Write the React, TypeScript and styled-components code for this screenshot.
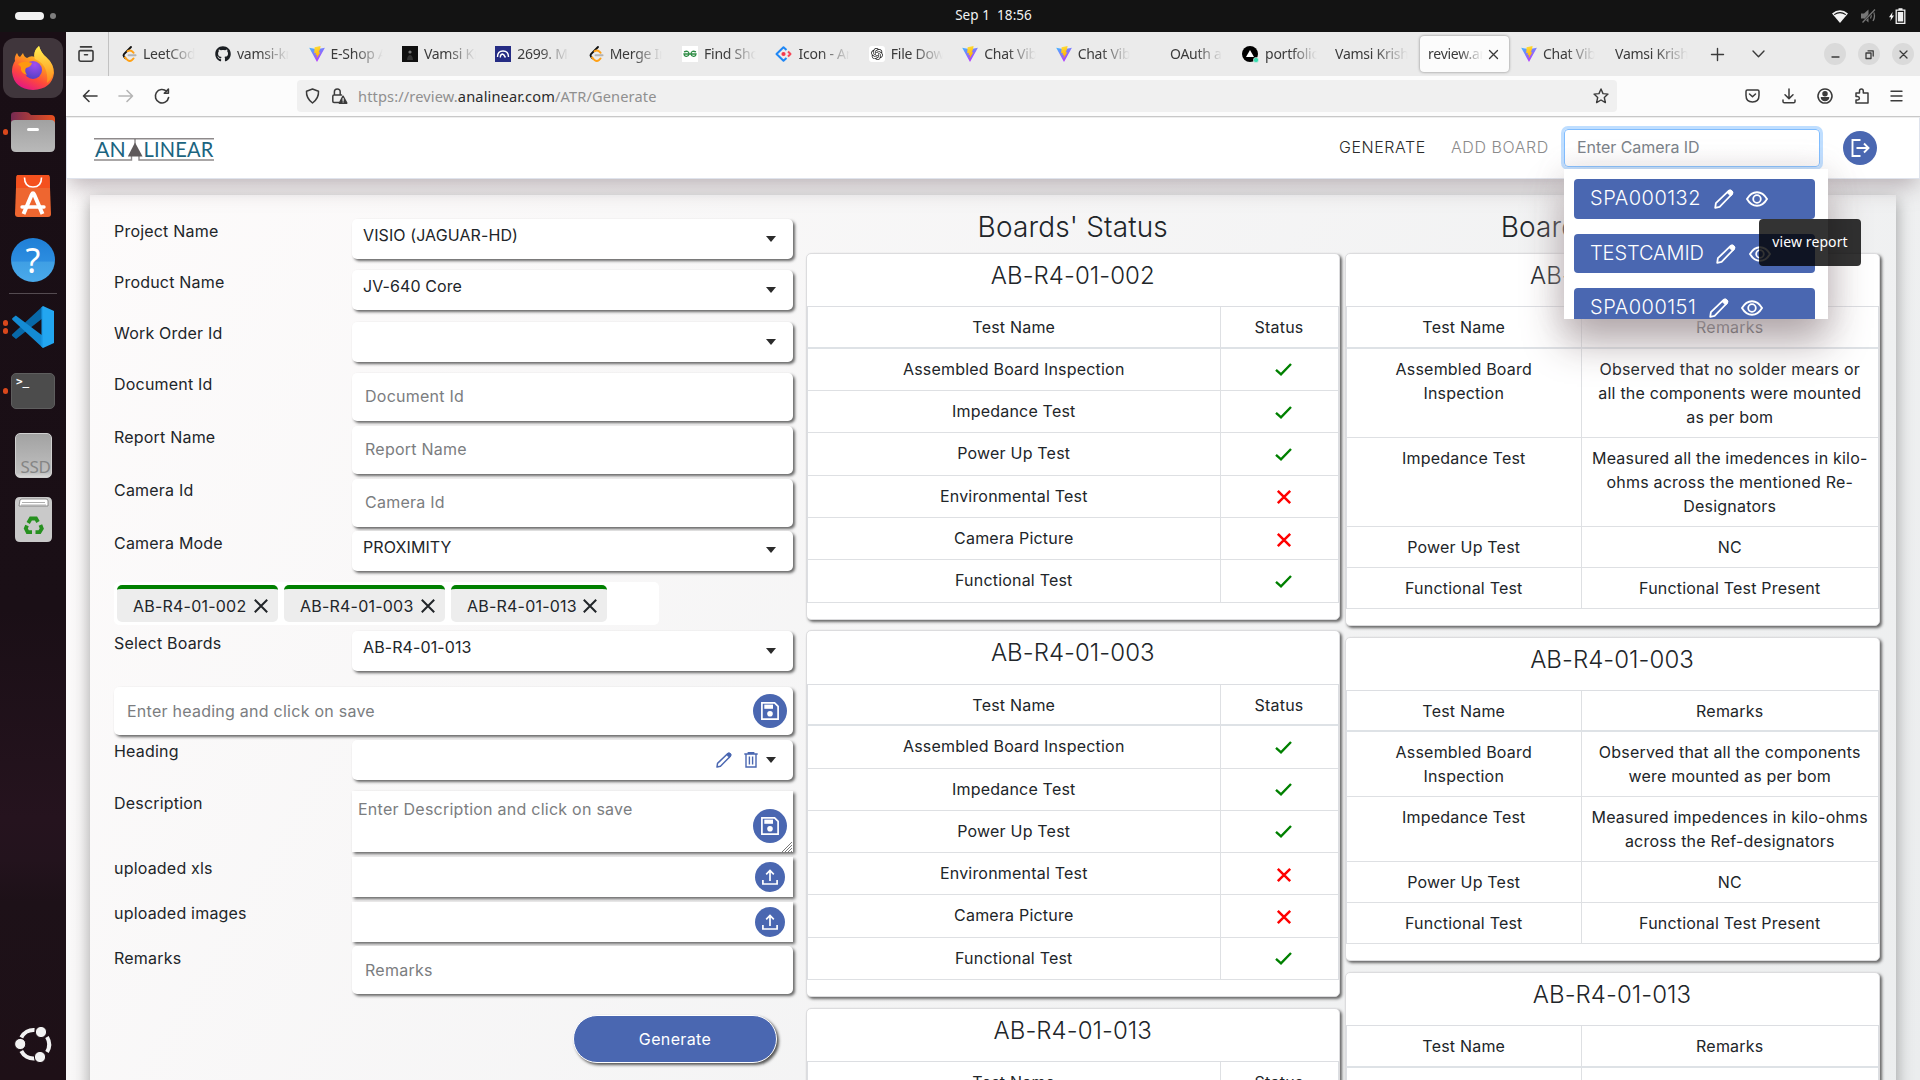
import React from "react";
import styled, { createGlobalStyle } from "styled-components";
import { FaGithub } from "react-icons/fa";
import { SiOpenai } from "react-icons/si";

const PAGE_FONT = 'Inter, "Liberation Sans", sans-serif';
const CHROME_FONT = '"Noto Sans", "Open Sans", sans-serif';
const BLUE = "#4a67b1";

const GlobalStyle = createGlobalStyle`
  * { box-sizing: border-box; }
  html, body { margin: 0; padding: 0; overflow: hidden; }
  body { background: #131313; }
  svg { display: block; flex: none; overflow: visible; }
`;

/* ---------- Desktop shell ---------- */
const Screen = styled.div`
  width: 1920px;
  height: 1080px;
  overflow: hidden;
  display: flex;
  flex-direction: column;
`;
const TopBar = styled.div`
  height: 32px;
  flex: none;
  background: #131313;
  display: grid;
  grid-template-columns: 1fr auto 1fr;
  align-items: center;
  color: #f2f2f2;
  padding: 0 14px 0 15px;
`;
const Workspaces = styled.div`
  display: flex;
  align-items: center;
  gap: 6px;
`;
const Pill = styled.span<{ $w: number; $h: number; $c: string }>`
  width: ${(p) => p.$w}px;
  height: ${(p) => p.$h}px;
  border-radius: 4px;
  background: ${(p) => p.$c};
`;
const Clock = styled.div`
  height: 32px;
  white-space: pre;
  font: 400 13.5px/30px ${CHROME_FONT};
  letter-spacing: 0.05px;
  padding-left: 66px;
`;
const Tray = styled.div`
  display: flex;
  justify-content: flex-end;
  align-items: center;
  gap: 13px;
`;
const Desktop = styled.div`
  flex: 1;
  display: flex;
  min-height: 0;
`;
const Dock = styled.div`
  width: 66px;
  flex: none;
  background: linear-gradient(180deg, #190e15 0%, #1a0f16 55%, #25131e 75%, #23131d 79%, #1d1118 83%, #1e1017 100%);
  display: flex;
  flex-direction: column;
  align-items: center;
  padding-top: 4px;
`;
const DockItem = styled.div<{ $h?: number }>`
  width: 66px;
  height: ${(p) => p.$h ?? 64}px;
  display: grid;
  grid-template-columns: 11px 44px 11px;
  align-items: center;
  justify-items: center;
`;
const RunDots = styled.div`
  display: flex;
  flex-direction: column;
  gap: 2.5px;
`;
const RunDot = styled.span`
  width: 5.5px;
  height: 5.5px;
  border-radius: 50%;
  background: #d9481c;
`;
const ActiveTile = styled.div`
  width: 60px;
  height: 60px;
  border-radius: 12px;
  background: #40363c;
  display: flex;
  align-items: center;
  justify-content: center;
`;
const DockRule = styled.div`
  width: 48px;
  height: 1px;
  background: #544b51;
  margin: 1px 0;
`;
const DockSpacer = styled.div`
  flex: 1;
`;

/* ---------- Browser ---------- */
const Browser = styled.div`
  flex: 1;
  min-width: 0;
  display: flex;
  flex-direction: column;
`;
const TabStrip = styled.div`
  height: 44px;
  flex: none;
  background: #ebebeb;
  display: flex;
  align-items: center;
  color: #3b3b3b;
`;
const ViewButton = styled.div`
  width: 43px;
  height: 44px;
  flex: none;
  display: flex;
  align-items: center;
  padding-left: 12px;
  border-right: 1px solid #c2c2c2;
`;
const Tab = styled.div<{ $w: number; $active?: boolean; $pad?: number }>`
  width: ${(p) => p.$w}px;
  height: 36px;
  flex: none;
  display: flex;
  align-items: center;
  gap: 6px;
  padding-left: ${(p) => p.$pad ?? 8}px;
  border-radius: 4px;
  font: 14px/36px ${CHROME_FONT};
  letter-spacing: -0.25px;
  ${(p) => p.$active && "background: #fcfcfc; box-shadow: 0 0 3px rgba(0,0,0,.45);"}
`;
const Tabs = styled.div`
  display: flex;
  align-items: center;
  width: 1602px;
  flex: none;
  padding-left: 5px;
`;
const TabText = styled.span<{ $w: number; $fade: number }>`
  width: ${(p) => p.$w}px;
  overflow: hidden;
  white-space: nowrap;
  mask-image: linear-gradient(90deg, #000 calc(100% - ${(p) => p.$fade}px), transparent);
`;
const WindowButtons = styled.div`
  display: flex;
  gap: 12px;
  margin-left: auto;
  padding-right: 6px;
`;
const RoundButton = styled.div`
  width: 22px;
  height: 22px;
  border-radius: 50%;
  background: #dadada;
  display: flex;
  align-items: center;
  justify-content: center;
`;
const StripActions = styled.div`
  display: flex;
  align-items: center;
  gap: 28px;
`;
const NavBar = styled.div`
  height: 41px;
  flex: none;
  background: #fcfcfc;
  border-bottom: 1px solid #c8c8c8;
  display: flex;
  align-items: center;
  padding: 0 17px 0 16px;
`;
const NavButtons = styled.div`
  display: flex;
  gap: 20px;
  width: 215px;
`;
const UrlBar = styled.div`
  width: 1320px;
  height: 32px;
  border-radius: 4px;
  background: #f0f0f0;
  display: flex;
  align-items: center;
  padding: 0 8px;
  gap: 10.5px;
  font: 14.6px/30px ${CHROME_FONT};
  letter-spacing: 0.13px;
  color: #8f8f8f;
`;
const Host = styled.span`
  color: #2b2b2b;
`;
const UrlText = styled.span`
  flex: 1;
`;
const NavTools = styled.div`
  margin-left: auto;
  display: flex;
  align-items: center;
  gap: 21.4px;
`;

/* ---------- Page ---------- */
const Page = styled.div`
  flex: 1;
  min-height: 0;
  overflow: hidden;
  background: linear-gradient(120deg, #fdfbfb 0%, #ebedee 100%);
  color: #212529;
  font: 380 16px/24px ${PAGE_FONT};
  letter-spacing: 0.2px;
`;
const Header = styled.header`
  height: 62px;
  background: #fff;
  border: 1px solid #dfe3ec;
  border-top-color: #eee;
  position: relative;
  z-index: 2;
  display: flex;
  align-items: center;
  padding: 0 42px 0 27px;
  box-shadow: 0 10px 22px -3px rgba(160, 148, 154, 0.7);
`;
const Menu = styled.nav`
  margin-left: auto;
  display: flex;
  align-items: center;
`;
const MenuLink = styled.span<{ $c: string; $mr: number; $w: number; $weight: number }>`
  width: ${(p) => p.$w}px;
  white-space: nowrap;
  color: ${(p) => p.$c};
  margin: 0 ${(p) => p.$mr}px 2px 0;
  font-weight: ${(p) => p.$weight};
  letter-spacing: 0.55px;
`;
const SearchBox = styled.div`
  position: relative;
  width: 256px;
  height: 38px;
  border: 1px solid #80bdff;
  border-radius: 4px;
  box-shadow: 0 0 0 3px #bfdeff;
  background: linear-gradient(180deg, #fff 50%, #fbfafb);
  padding: 0 12px;
  font-size: 16px;
  line-height: 35px;
  color: #7b8289;
  letter-spacing: -0.05px;
  margin-right: 23px;
`;
const Dropdown = styled.div`
  position: absolute;
  top: 39px;
  left: -1px;
  width: 264px;
  height: 150px;
  overflow: hidden;
  background: #fff;
  padding: 10px 13px 0 10px;
  display: flex;
  flex-direction: column;
  gap: 15px;
`;
const DropShadow = styled.div`
  position: absolute;
  top: 39px;
  left: -1px;
  width: 264px;
  height: 150px;
  box-shadow: 0 22px 38px rgba(172, 160, 163, 0.95), 0 0 30px rgba(172, 160, 163, 0.15);
`;
const CameraButton = styled.div<{ $ls: number }>`
  height: 39.5px;
  flex: none;
  border-radius: 4px;
  background: ${BLUE};
  color: #fff;
  display: flex;
  align-items: center;
  padding: 1px 0 0 16px;
  font-size: 20px;
  font-weight: 300;
  letter-spacing: ${(p) => p.$ls}px;
  gap: 12.5px;
`;
const CameraName = styled.span`
  padding-bottom: 1px;
`;
const Tooltip = styled.div`
  position: absolute;
  top: 89px;
  left: 194px;
  width: 102px;
  height: 47px;
  border-radius: 4px;
  background: rgba(0, 0, 0, 0.8);
  color: #fff;
  text-align: center;
  font: 14px/45px ${CHROME_FONT};
  letter-spacing: 0.1px;
`;
const Circle = styled.div<{ $d: number }>`
  width: ${(p) => p.$d}px;
  height: ${(p) => p.$d}px;
  flex: none;
  border-radius: 50%;
  background: ${BLUE};
  color: #fff;
  display: flex;
  align-items: center;
  justify-content: center;
`;

const Panel = styled.main`
  margin: 16px 24px 0;
  height: 1100px;
  background: linear-gradient(120deg, #fdfbfb 0%, #ebedee 100%);
  box-shadow: 0 5px 16px rgba(0, 0, 0, 0.36);
  display: flex;
  padding: 24px 16px 0 24px;
`;
const Form = styled.section`
  width: 679px;
  margin-right: 13px;
  flex: none;
`;
const FormRow = styled.div<{ $h: number }>`
  height: ${(p) => p.$h}px;
  display: flex;
  align-items: flex-start;
`;
const Label = styled.label`
  width: 238px;
  flex: none;
`;
const Field = styled.div<{ $h: number; $mt?: number; $square?: boolean; $kind?: "select" | "input" | "area" }>`
  flex: 1;
  height: ${(p) => p.$h}px;
  margin-top: ${(p) => p.$mt ?? 0}px;
  border-radius: ${(p) => (p.$square ? 0 : 5)}px;
  background: #fff;
  box-shadow: 2px 2px 3px #666;
  display: flex;
  align-items: ${(p) => (p.$kind === "area" ? "flex-start" : "center")};
  padding: ${(p) =>
    p.$kind === "input" ? "0 6px 1px 13px" : p.$kind === "area" ? "6px 6px 0 6px" : "0 17px 0 11px"};
  color: ${(p) => (p.$kind === "select" ? "#212529" : "#7b7d80")};
  letter-spacing: ${(p) => (p.$kind === "select" ? 0.1 : 0.25)}px;
`;
const FieldText = styled.span`
  flex: 1;
  height: 32px;
`;
const InputText = styled.span`
  flex: 1;
`;
const Caret = styled.span`
  border: 5.5px solid transparent;
  border-top: 6px solid #2b2b2b;
  border-bottom: 0;
  margin-bottom: 1px;
`;
const HeadingTools = styled.div`
  display: flex;
  align-items: center;
  gap: 12px;
  margin-right: 8.5px;
`;
const UploadSlot = styled.div`
  margin-left: auto;
  margin-right: -9px;
`;
const SaveSlot = styled.div`
  margin-top: 12px;
  display: flex;
  flex-direction: column;
  align-items: flex-end;
`;
const Grip = styled.div`
  height: 12px;
  margin: -2px -5px 0 0;
`;
const ChipBar = styled.div`
  width: 545px;
  height: 43px;
  border-radius: 5px;
  background: #fff;
  display: flex;
  gap: 6px;
  padding: 3px 3px 0;
`;
const Chip = styled.div<{ $w: number }>`
  width: ${(p) => p.$w}px;
  height: 37px;
  border-radius: 5px;
  border-top: 4px solid #008000;
  background: #ededed;
  display: flex;
  align-items: center;
  justify-content: space-between;
  padding: 0 10px 0 16px;
  letter-spacing: 0.22px;
  white-space: nowrap;
`;
const GenerateButton = styled.div`
  width: 204px;
  height: 48px;
  margin: 20px 0 0 459px;
  border-radius: 24px;
  border: 1px solid #fff;
  background: ${BLUE};
  box-shadow: 2px 2px 3px #555;
  color: #fff;
  text-align: center;
  line-height: 46px;
  letter-spacing: 0.35px;
`;

const BoardColumn = styled.section<{ $w: number; $mr: number }>`
  width: ${(p) => p.$w}px;
  margin-right: ${(p) => p.$mr}px;
  display: flex;
  flex-direction: column;
  gap: 10.7px;
  flex: none;
`;
const ColumnTitle = styled.h3`
  margin: -12px 0 0;
  height: 35.3px;
  line-height: 41px;
  text-align: center;
  font-size: 28px;
  font-weight: 300;
  letter-spacing: 0.15px;
  flex: none;
`;
const Card = styled.article`
  border: 1px solid #dcdcde;
  border-radius: 5px;
  background: #fff;
  box-shadow: 2px 2px 3px #666;
  padding-bottom: 16px;
  flex: none;
`;
const CardTitle = styled.h4`
  margin: 0;
  height: 52.2px;
  text-align: center;
  font-size: 24px;
  font-weight: 300;
  line-height: 44px;
  letter-spacing: 0.05px;
`;
const Table = styled.div<{ $cols: string }>`
  display: grid;
  grid-template-columns: ${(p) => p.$cols};
  border: 1px solid #dcdee2;
  border-bottom: 0;
  text-align: center;
`;
const Cell = styled.div<{ $h?: number; $head?: boolean; $side?: boolean }>`
  ${(p) => (p.$h ? `height: ${p.$h}px;` : "")}
  padding: 8px 6px 8px;
  white-space: nowrap;
  border-bottom: ${(p) => (p.$head ? "2px solid #dee2e6" : "1px solid #dee0e3")};
  border-left: ${(p) => (p.$side ? "1px solid #dee0e3" : "0")};
`;
const Mark = styled.div`
  display: flex;
  justify-content: center;
  padding: 6.5px 0 0 9px;
`;

/* ---------- Icons ---------- */
type P = { c?: string; s?: number };

const Pencil = ({ c = "#fff", s = 20 }: P) => (
  <svg width={s} height={s} viewBox="0 0 20 20" fill="none" stroke={c} strokeWidth="1.8" strokeLinejoin="round">
    <path d="M1.2 18.8L1.9 14.2L14.4 2.2Q16 .8 17.6 2.3T17.6 5.5L5.6 17.8Z" />
    <path d="M13 3.4L16.7 7L18.2 5.2Q19.4 3 17.8 1.8T14.9 1.6Z" fill={c} strokeWidth="1" />
  </svg>
);
const Eye = () => (
  <svg width="22" height="16" viewBox="0 0 22 16" fill="none" stroke="#fff" strokeWidth="1.9">
    <path d="M1 8Q5 1.2 11 1.2T21 8Q17 14.8 11 14.8T1 8Z" />
    <circle cx="11" cy="8" r="3.8" strokeWidth="1.8" />
  </svg>
);
const Trash = () => (
  <svg width="14" height="16" viewBox="0 0 14 16" fill="none" stroke={BLUE} strokeWidth="1.4">
    <path d="M.3 2H13.7M4.3 1.8V.7H9.7V1.8M2 2V15H12V2M5.4 4.5V12.5M8.6 4.5V12.5" />
  </svg>
);
const Save = () => (
  <svg width="18" height="18" viewBox="0 0 18 18" fill="none" stroke="#fff" strokeWidth="1.7">
    <path d="M.9 .9H13.6L17.1 4.4V17.1H.9Z" />
    <path d="M3.3 2.6H12V6.8H3.3Z" fill="#fff" stroke="none" />
    <circle cx="9" cy="11.7" r="2.8" fill="#fff" stroke="none" />
  </svg>
);
const Upload = () => (
  <svg width="16" height="16" viewBox="0 0 16 16" fill="none" stroke="#fff" strokeWidth="1.7">
    <path d="M8 12V1.5M4.2 5.3L8 1.5L11.8 5.3M.9 11V15H15.1V11" />
  </svg>
);
const Logout = () => (
  <svg width="19" height="18" viewBox="0 0 19 18" fill="none" stroke="#fff" strokeWidth="1.9">
    <path d="M9.5 1H1.5V17H9.5M5.5 9H17.5M13 4.5L17.5 9L13 13.5" />
  </svg>
);
const Check = () => (
  <svg width="17" height="13" viewBox="0 0 17 13" fill="none" stroke="#008000" strokeWidth="2.4">
    <path d="M1 6.8L6 11.3L16 1" />
  </svg>
);
const Cross = ({ c = "red", s = 14 }: P) => (
  <svg width={s} height={s} viewBox="0 0 14 14" fill="none" stroke={c} strokeWidth={c === "red" ? 2.5 : 2}>
    <path d="M.8 .8L13.2 13.2M13.2 .8L.8 13.2" />
  </svg>
);
type LineProps = { d: string; w?: number; h?: number; c?: string; sw?: number; children?: React.ReactNode };
const Line = ({ d, w = 16, h = 16, c = "#3b3b3b", sw = 1.4, children }: LineProps) => (
  <svg width={w} height={h} viewBox={`0 0 ${w} ${h}`} fill="none" stroke={c} strokeWidth={sw} strokeLinejoin="round" strokeLinecap="round">
    <path d={d} />
    {children}
  </svg>
);
const Vite = () => (
  <svg width="16" height="16" viewBox="0 0 16 16">
    <defs>
      <linearGradient id="va" x1="0" y1="0" x2=".6" y2="1"><stop offset="0" stopColor="#41b8ff" /><stop offset="1" stopColor="#bd34fe" /></linearGradient>
      <linearGradient id="vb" x1=".4" y1="0" x2=".6" y2="1"><stop offset="0" stopColor="#ffdd35" /><stop offset="1" stopColor="#ffa800" /></linearGradient>
    </defs>
    <path d="M.2 1.8L8 16L15.9 1.8L8 3.2Z" fill="url(#va)" />
    <path d="M11.6 0L5.6 1.2L5.2 7.2L7 6.9L6.5 9.2L8 8.9L7.6 12.6L11.4 6.2L9.7 6.4L11 3.2Z" fill="url(#vb)" />
  </svg>
);
const Leet = () => (
  <svg width="15" height="16" viewBox="0 0 15 16" fill="none" strokeLinecap="round" strokeWidth="1.9">
    <path d="M9 1L2 8.2Q1 9.4 2 10.6L3.5 12.3" stroke="#111" />
    <path d="M3 11.5L5.8 14.3Q8 15.8 10 14L11.6 12.4M5.5 5.3Q8 3.6 10 5.3L11.6 6.8" stroke="#ffa116" />
    <path d="M6.5 9.3H13.6" stroke="#b3b3b3" />
  </svg>
);
const DarkPhoto = () => (
  <svg width="16" height="16" viewBox="0 0 16 16"><path d="M0 0H16V16H0Z" fill="#101010" /><circle cx="8" cy="6" r="1.6" fill="#777" /><path d="M5 14Q5.5 9 8 9T11 14Z" fill="#333" /></svg>
);
const BlueSquare = () => (
  <svg width="16" height="16" viewBox="0 0 16 16" fill="none" stroke="#fff" strokeWidth="1.4"><path d="M0 0H16V16H0Z" fill="#252c84" stroke="none" /><path d="M2.5 11Q2.5 5 8 5T13.5 11M5.3 11.5Q5.3 8 8 8M8.2 8L10.5 11.5" /></svg>
);
const Geeks = () => (
  <svg width="16" height="16" viewBox="0 0 16 16" fill="none" stroke="#2f8d46" strokeWidth="1.3"><path d="M0 0H16V16H0Z" fill="#fff" stroke="none" /><path d="M2 5.8Q7 4 7 8.2Q6.5 10.8 4 10.4Q2 10 2 8H14Q14 10 12 10.4Q9.5 10.8 9 8.2Q9 4 14 5.8" /></svg>
);
const Ant = () => (
  <svg width="17" height="16" viewBox="0 0 17 16" fill="none" strokeWidth="2" strokeLinejoin="round"><path d="M11.5 4L8.5 1.2L1.5 8L8.5 14.8L11.5 12" stroke="#1f87f5" /><path d="M13 5.5L15.5 8L13 10.5" stroke="#f5495a" /><circle cx="8.5" cy="8" r="2.1" fill="#f5394c" /></svg>
);
const Portfolio = () => (
  <svg width="17" height="16" viewBox="0 0 17 16"><circle cx="8" cy="8" r="8" fill="#000" /><path d="M8 4L12 11H4Z" fill="#fff" /><circle cx="14" cy="14" r="2.6" fill="#38dcb0" stroke="#ebebeb" strokeWidth=".6" /></svg>
);
const GptTile = styled.span`
  width: 16px;
  height: 16px;
  background: #fff;
  border-radius: 3px;
  display: flex;
  align-items: center;
  justify-content: center;
  color: #222;
`;

const LogoBox = styled.div`
  padding-top: 3px;
`;
const LogoWord = styled.text`
  font: 400 22px Lato, sans-serif;
  fill: #1b6480;
`;
const Logo = () => (
  <svg width="120" height="24" viewBox="0 0 120 24">
    <path d="M0 .8H120M0 22H37.5V17.5M45 17.5V22H120" fill="none" stroke="#8e8a8b" strokeWidth="1.4" />
    <path d="M41 1V6" stroke="#5f5a5b" strokeWidth="1" />
    <path d="M41 4.5L48.6 18.5H33.8Z" fill="#5f5a5b" />
    <LogoWord x="1" y="18.7" textLength="31" lengthAdjust="spacingAndGlyphs">AN</LogoWord>
    <LogoWord x="49.5" y="18.7" textLength="70" lengthAdjust="spacingAndGlyphs">LINEAR</LogoWord>
  </svg>
);

/* Dock artwork */
const Firefox = () => (
  <svg width="44" height="46" viewBox="0 0 44 46">
    <defs>
      <linearGradient id="fa" x1=".8" y1="0" x2=".3" y2="1"><stop offset="0" stopColor="#fff44f" /><stop offset=".4" stopColor="#ff9a1f" /><stop offset=".7" stopColor="#ff4a3a" /><stop offset="1" stopColor="#e31587" /></linearGradient>
      <radialGradient id="fb" cx=".6" cy=".2" r=".9"><stop offset="0" stopColor="#a24df0" /><stop offset="1" stopColor="#4a3fc0" /></radialGradient>
      <linearGradient id="fc" x1="0" y1="0" x2="0" y2="1"><stop offset="0" stopColor="#fff050" /><stop offset="1" stopColor="#ff8a1c" /></linearGradient>
    </defs>
    <path d="M6 8Q7 11 9 12L12 8Q13 12 16 13Q20 10 24 12Q22 6 28 1Q30 8 35 12Q43 19 43 28Q41 44 22 45Q3 44 1 27Q1 20 4 16Q3 12 6 8Z" fill="url(#fa)" />
    <path d="M28 1Q30 8 35 12Q43 19 42 28Q41 34 36 38Q38 20 24 14Q21 7 28 1Z" fill="url(#fc)" />
    <circle cx="22" cy="25" r="9" fill="url(#fb)" />
    <path d="M7 19Q13 15 21 18Q20 22 15 23Q13 26 16 30Q9 28 10 22Z" fill="#ff980e" />
  </svg>
);
const Files = () => (
  <svg width="44" height="42" viewBox="0 0 44 42">
    <defs>
      <linearGradient id="ga" x1="0" y1="0" x2="1" y2="0"><stop offset="0" stopColor="#762a52" /><stop offset="1" stopColor="#e8501f" /></linearGradient>
      <linearGradient id="gb" x1="0" y1="0" x2="0" y2="1"><stop offset="0" stopColor="#a1a1a1" /><stop offset="1" stopColor="#b9b9b9" /></linearGradient>
    </defs>
    <path d="M0 14V4Q0 1 4 1H15Q18 1 20 4H40Q44 4 44 8V14Z" fill="url(#ga)" />
    <path d="M0 12Q0 9 4 9H40Q44 9 44 13V36Q44 41 39 41H5Q0 41 0 36Z" fill="url(#gb)" />
    <path d="M17.5 18.5H26.5" stroke="#fff" strokeWidth="3" strokeLinecap="round" />
  </svg>
);
const AppCenter = () => (
  <svg width="36" height="42" viewBox="0 0 36 42" fill="none" stroke="#fff">
    <path d="M3 0H33Q34.5 0 34.6 2L36 39Q36 42 33 42H3Q0 42 0 39L1.4 2Q1.5 0 3 0Z" fill="#ee6630" stroke="none" />
    <path d="M3 0H33Q34.5 0 34.6 2L35 13H1L1.4 2Q1.5 0 3 0Z" fill="#f4511e" stroke="none" />
    <path d="M9.5 2.5Q9.5 12 18 12T26.5 2.5" strokeWidth="1.6" />
    <path d="M8.5 39L16.8 19.5Q18 17 19.2 19.5L27.5 39" strokeWidth="4" />
    <path d="M7 32H29" strokeWidth="3.4" strokeLinecap="round" />
  </svg>
);
const HelpBall = styled.div`
  width: 44px;
  height: 44px;
  border-radius: 50%;
  background: linear-gradient(180deg, #1f7fd6 0%, #2c8de0 53%, #3f9fe4 54%, #4aa9ea 100%);
  color: #fff;
  text-align: center;
  font: 400 34px/44px "Noto Sans", sans-serif;
`;
const VsCode = () => (
  <svg width="42" height="42" viewBox="0 0 42 42">
    <path d="M0 28.5L31 0V12L4 33L.6 30.2Q-.6 29.4 0 28.5Z" fill="#0868a8" />
    <path d="M.6 12L3.8 9.4L31 30V42L.6 14Q-.6 13 .6 12Z" fill="#148bd4" />
    <path d="M31 0L42 5V37L31 42Z" fill="#23a6f0" />
    <path d="M31 0V42L29.5 40.5V1.5Z" fill="#1c9be8" />
  </svg>
);
const Terminal = styled.div`
  width: 44px;
  height: 36px;
  border-radius: 5px;
  background: #4c4c4c;
  border: 1px solid #5e5e5e;
  color: #fff;
  font: 700 11px/16px "DejaVu Sans Mono", monospace;
  padding-left: 4px;
`;
const Drive = styled.div`
  width: 37px;
  height: 45px;
  border-radius: 5px;
  border: 1px solid #d0d0d0;
  background: linear-gradient(180deg, #a2a2a2, #bfbfbf 90%, #dadada);
  color: #858585;
  font: 400 17px/66px "Noto Sans", sans-serif;
  letter-spacing: -0.4px;
  text-align: right;
`;
const Trashcan = () => (
  <svg width="37" height="45" viewBox="0 0 37 45">
    <path d="M5 0H32Q37 0 37 5V40Q37 45 32 45H5Q0 45 0 40V5Q0 0 5 0Z" fill="#c9c9c9" />
    <path d="M4 9L5 3Q6 2 7 2H31Q33 2 33 4V9Z" fill="#fff" stroke="#777" strokeWidth=".8" />
    <path d="M7 5.5H30M6 8H31" stroke="#999" strokeWidth=".8" />
    <g fill="none" stroke="#26901f" strokeWidth="3.8">
      <path d="M13.2 26L15.8 21.5H21L23 25" />
      <path d="M25.4 28L26.8 31.5L24.6 35.2H20.5" />
      <path d="M17 35.2H12.6L10.8 31.5L12 28.5" />
    </g>
  </svg>
);
const Ubuntu = () => (
  <svg width="36" height="36" viewBox="0 0 36 36" fill="none" stroke="#f2f2f2" strokeWidth="4">
    <path d="M6.3 11.5A13.8 13.8 0 0 1 19.5 4M32 11A14.5 14.5 0 0 1 32 26M19.5 32.5A13.8 13.8 0 0 1 6.3 25" />
    <g fill="#f2f2f2" stroke="#1e1017" strokeWidth="1">
      <circle cx="5.2" cy="18" r="5.6" /><circle cx="26" cy="6" r="5.6" /><circle cx="25" cy="31" r="5.6" />
    </g>
  </svg>
);

/* ---------- Data ---------- */
const leftTabs: { icon: React.ReactNode; t: string; w: number }[] = [
  { icon: <Leet />, t: "LeetCode", w: 93 },
  { icon: <FaGithub size={16} color="#1b1f23" />, t: "vamsi-kri", w: 93.5 },
  { icon: <Vite />, t: "E-Shop App", w: 93.4 },
  { icon: <DarkPhoto />, t: "Vamsi Kri", w: 93.4 },
  { icon: <BlueSquare />, t: "2699. Mod", w: 93.4 },
  { icon: <Leet />, t: "Merge In", w: 93.4 },
  { icon: <Geeks />, t: "Find Short", w: 93.4 },
  { icon: <Ant />, t: "Icon - Ant", w: 93.4 },
  { icon: <GptTile><SiOpenai size={12} /></GptTile>, t: "File Down", w: 93.4 },
  { icon: <Vite />, t: "Chat Vibe", w: 93.4 },
  { icon: <Vite />, t: "Chat Vibe", w: 93.4 },
];

const cameras = [
  { name: "SPA000132", ls: 0.5 },
  { name: "TESTCAMID", ls: -0.1 },
  { name: "SPA000151", ls: 0.5 },
];

const statusRows: [string, boolean][] = [
  ["Assembled Board Inspection", true],
  ["Impedance Test", true],
  ["Power Up Test", true],
  ["Environmental Test", false],
  ["Camera Picture", false],
  ["Functional Test", true],
];
const boards = ["AB-R4-01-002", "AB-R4-01-003", "AB-R4-01-013"];
const remarks: [string, React.ReactNode][][] = [
  [
    ["Assembled Board Inspection", <>Observed that no solder mears or<br />all the components were mounted<br />as per bom</>],
    ["Impedance Test", <>Measured all the imedences in kilo-<br />ohms across the mentioned Re-<br />Designators</>],
    ["Power Up Test", "NC"],
    ["Functional Test", "Functional Test Present"],
  ],
  [
    ["Assembled Board Inspection", <>Observed that all the components<br />were mounted as per bom</>],
    ["Impedance Test", <>Measured impedences in kilo-ohms<br />across the Ref-designators</>],
    ["Power Up Test", "NC"],
    ["Functional Test", "Functional Test Present"],
  ],
  [["Assembled Board Inspection", "Observed that all the components"]],
];

const Select = ({ label, value, h, mt = 0 }: { label: string; value?: string; h: number; mt?: number }) => (
  <FormRow $h={h}>
    <Label>{label}</Label>
    <Field $h={40} $mt={mt} $kind="select"><FieldText>{value}</FieldText><Caret /></Field>
  </FormRow>
);
const Input = ({ label, h = 53, mt = 1 }: { label: string; h?: number; mt?: number }) => (
  <FormRow $h={h}>
    <Label>{label}</Label>
    <Field $h={48} $mt={mt} $kind="input"><InputText>{label}</InputText></Field>
  </FormRow>
);

export default function App() {
  return (
    <Screen>
      <GlobalStyle />
      <TopBar>
        <Workspaces><Pill $w={29} $h={8} $c="#f2f2f2" /><Pill $w={6} $h={6} $c="#7e7e7e" /></Workspaces>
        <Clock>Sep 1  18:56</Clock>
        <Tray>
          <svg width="16" height="13" viewBox="0 0 16 13"><path d="M0 3.5Q8-3 16 3.5L8 13Z" fill="#f2f2f2" /><path d="M2.2 4.6Q8 .6 13.8 4.6" stroke="#131313" strokeWidth="1.1" fill="none" /></svg>
          <svg width="15" height="14" viewBox="0 0 15 14" fill="none" stroke="#777" strokeWidth="1.3"><path d="M0 4.5H3L7.5 .5V13.5L3 9.5H0Z" fill="#777" stroke="none" /><path d="M9.5 4.5Q11 7 9.5 9.5M12 2Q15 7 12 12" /><path d="M14.5 0L1 14" stroke="#131313" strokeWidth="2.4" /><path d="M14 .5L1.5 13.5" /></svg>
          <svg width="17" height="16" viewBox="0 0 17 16" fill="none" stroke="#f2f2f2" strokeWidth="1.3"><path d="M7.2 2.2H15.8V15.3H7.2ZM9.5 1H13.5" /><path d="M8.8 4H14.2V13.6H8.8ZM3.6 4L0 9.2H2L1.4 13L5 7.6H3Z" fill="#f2f2f2" stroke="none" /></svg>
        </Tray>
      </TopBar>
      <Desktop>
        <Dock>
          <DockItem><RunDots><RunDot /></RunDots><ActiveTile><Firefox /></ActiveTile></DockItem>
          <DockItem><RunDots><RunDot /></RunDots><Files /></DockItem>
          <DockItem><span /><AppCenter /></DockItem>
          <DockItem><span /><HelpBall>?</HelpBall></DockItem>
          <DockRule />
          <DockItem><RunDots><RunDot /><RunDot /></RunDots><VsCode /></DockItem>
          <DockItem><RunDots><RunDot /></RunDots><Terminal>&gt;_</Terminal></DockItem>
          <DockItem><span /><Drive>SSD</Drive></DockItem>
          <DockItem><span /><Trashcan /></DockItem>
          <DockSpacer />
          <DockItem $h={72}><span /><Ubuntu /></DockItem>
        </Dock>
        <Browser>
          <TabStrip>
            <ViewButton><Line w={16} h={16} sw={1.6} d="M1 5.8Q1 4.6 2.2 4.6H13.8Q15 4.6 15 5.8V13.6Q15 15.2 13.4 15.2H2.6Q1 15.2 1 13.6ZM2.5 .9H13.5M6.5 8.8H9.5" /></ViewButton>
            <Tabs>
              {leftTabs.map((t, i) => (
                <Tab key={i} $w={t.w}>{t.icon}<TabText $w={52} $fade={29}>{t.t}</TabText></Tab>
              ))}
              <Tab $w={93} $pad={29}><TabText $w={52} $fade={26}>OAuth and</TabText></Tab>
              <Tab $w={93}><Portfolio /><TabText $w={52} $fade={26}>portfolio</TabText></Tab>
              <Tab $w={93}><TabText $w={73} $fade={34}>Vamsi Krishna</TabText></Tab>
              <Tab $w={89} $active><TabText $w={55} $fade={24}>review.anal</TabText><Line w={9} h={9} sw={1.3} d="M.5 .5L8.5 8.5M8.5 .5L.5 8.5" /></Tab>
              <Tab $w={96} $pad={12}><Vite /><TabText $w={52} $fade={29}>Chat Vibe</TabText></Tab>
              <Tab $w={92} $pad={10}><TabText $w={73} $fade={34}>Vamsi Krishna</TabText></Tab>
            </Tabs>
            <StripActions>
              <Line w={13} h={13} sw={1.4} d="M6.5 .5V12.5M.5 6.5H12.5" />
              <Line w={13} h={8} sw={1.4} d="M1 1L6.5 6.8L12 1" />
            </StripActions>
            <WindowButtons>
              <RoundButton><Line w={9} h={9} sw={1.3} d="M1 7H8" /></RoundButton>
              <RoundButton><Line w={9} h={9} sw={1.3} d="M1 3H6V8.5H1ZM3 .8H8.2V6" /></RoundButton>
              <RoundButton><Line w={9} h={9} sw={1.3} d="M1 1L8 8M8 1L1 8" /></RoundButton>
            </WindowButtons>
          </TabStrip>
          <NavBar>
            <NavButtons>
              <Line sw={1.6} d="M15 8H1.5M7 2.5L1.5 8L7 13.5" />
              <Line sw={1.6} c="#b5b5b5" d="M1 8H14.5M9 2.5L14.5 8L9 13.5" />
              <Line sw={1.6} d="M14.6 9.5A6.7 6.7 0 1 1 12.6 3.3M14.4 1V5.2H10.3Z" />
            </NavButtons>
            <UrlBar>
              <Line w={15} sw={1.5} d="M7.5 1L13.5 3.2Q14 10 7.5 15Q1 10 1.5 3.2Z" />
              <Line w={17} sw={1.5} d="M8 14.5H3Q1.8 14.5 1.8 13.3V8.2Q1.8 7 3 7H10.5M3.4 7V3.8Q3.4 1 6.3 1T9.2 3.8V7">
                <path d="M12 8.2L15.8 15.2H8.4Z" fill="#3b3b3b" /><path d="M12.1 10.4V12.4M12.1 13.9V14" stroke="#fff" strokeWidth="1.1" />
              </Line>
              <UrlText>https://review.<Host>analinear.com</Host>/ATR/Generate</UrlText>
              <Line sw={1.4} d="M8 1L10 5.6L15 6.1L11.3 9.5L12.4 14.6L8 12L3.6 14.6L4.7 9.5L1 6.1L6 5.6Z" />
            </UrlBar>
            <NavTools>
              <Line w={15} h={14} sw={1.5} d="M2.4 1H12.6Q14 1 14 2.4V6.3Q14 13 7.5 13T1 6.3V2.4Q1 1 2.4 1ZM4.5 5L7.5 7.8L10.5 5" />
              <Line w={14} sw={1.5} d="M7 1V10.5M3 6.8L7 10.6L11 6.8M1 12V13.5Q1 14.8 2.3 14.8H11.7Q13 14.8 13 13.5V12" />
              <Line w={16} sw={1.5} d="M8 1A7 7 0 1 1 7.99 1Z"><circle cx="8" cy="5.8" r="2" fill="#3b3b3b" /><path d="M4.4 9.7H11.6Q11 12.5 8 12.5T4.4 9.7Z" fill="#3b3b3b" /></Line>
              <Line w={14} sw={1.5} d="M1 5H4.5V3.2Q4.5 1 6.4 1T8.3 3.2V5H13V15H1V12H2.6Q4.4 11.8 4.4 10.2T2.6 8.4H1Z" />
              <Line w={13} h={12} sw={1.4} d="M1 1.2H12M1 6H12M1 10.8H12" />
            </NavTools>
          </NavBar>
          <Page>
            <Header>
              <LogoBox><Logo /></LogoBox>
              <Menu>
                <MenuLink $c="#2b2b2b" $mr={25} $w={87} $weight={350}>GENERATE</MenuLink>
                <MenuLink $c="#8b8b8b" $mr={15} $w={98} $weight={320}>ADD BOARD</MenuLink>
                <SearchBox>
                  Enter Camera ID
                  <DropShadow />
                  <Dropdown>
                    {cameras.map((n) => (
                      <CameraButton key={n.name} $ls={n.ls}><CameraName>{n.name}</CameraName><Pencil /><Eye /></CameraButton>
                    ))}
                  </Dropdown>
                  <Tooltip>view report</Tooltip>
                </SearchBox>
                <Circle $d={34}><Logout /></Circle>
              </Menu>
            </Header>
            <Panel>
              <Form>
                <Select label="Project Name" value="VISIO (JAGUAR-HD)" h={51} />
                <Select label="Product Name" value="JV-640 Core" h={51} />
                <Select label="Work Order Id" h={51} mt={1} />
                <Input label="Document Id" h={52.5} mt={0.5} />
                <Input label="Report Name" />
                <Input label="Camera Id" />
                <Select label="Camera Mode" value="PROXIMITY" h={51.5} />
                <FormRow $h={49}>
                  <ChipBar>
                    {boards.map((b, i) => (
                      <Chip key={b} $w={i === 2 ? 156 : 161}>{b}<Cross c="#212529" /></Chip>
                    ))}
                  </ChipBar>
                </FormRow>
                <Select label="Select Boards" value="AB-R4-01-013" h={56} />
                <FormRow $h={52}>
                  <Field $h={48} $kind="input"><InputText>Enter heading and click on save</InputText><Circle $d={34}><Save /></Circle></Field>
                </FormRow>
                <FormRow $h={52}>
                  <Label>Heading</Label>
                  <Field $h={40} $mt={1} $kind="select"><FieldText /><HeadingTools><Pencil c={BLUE} s={16} /><Trash /></HeadingTools><Caret /></Field>
                </FormRow>
                <FormRow $h={65}>
                  <Label>Description</Label>
                  <Field $h={61} $square $kind="area">
                    <InputText>Enter Description and click on save</InputText>
                    <SaveSlot><Circle $d={34}><Save /></Circle><Grip><svg width="11" height="11" viewBox="0 0 11 11" stroke="#777" strokeWidth="1"><path d="M1 11L11 1M4 11L11 4M7 11L11 7M10 11L11 10" /></svg></Grip></SaveSlot>
                  </Field>
                </FormRow>
                <FormRow $h={45}>
                  <Label>uploaded xls</Label>
                  <Field $h={40} $mt={1} $square><UploadSlot><Circle $d={30}><Upload /></Circle></UploadSlot></Field>
                </FormRow>
                <FormRow $h={45}>
                  <Label>uploaded images</Label>
                  <Field $h={40} $mt={1} $square><UploadSlot><Circle $d={30}><Upload /></Circle></UploadSlot></Field>
                </FormRow>
                <Input label="Remarks" h={49} mt={0} />
                <GenerateButton>Generate</GenerateButton>
              </Form>
              <BoardColumn $w={533.5} $mr={5}>
                <ColumnTitle>Boards' Status</ColumnTitle>
                {boards.map((b) => (
                  <Card key={b}>
                    <CardTitle>{b}</CardTitle>
                    <Table $cols="411.5px 1fr">
                      <Cell $head $h={41.7}>Test Name</Cell><Cell $head $side $h={41.7}>Status</Cell>
                      {statusRows.map(([n, ok]) => (
                        <React.Fragment key={n}>
                          <Cell $h={42.3}>{n}</Cell>
                          <Cell $h={42.3} $side><Mark>{ok ? <Check /> : <Cross />}</Mark></Cell>
                        </React.Fragment>
                      ))}
                    </Table>
                  </Card>
                ))}
              </BoardColumn>
              <BoardColumn $w={535} $mr={0}>
                <ColumnTitle>Boards' Remarks</ColumnTitle>
                {remarks.map((rows, i) => (
                  <Card key={i}>
                    <CardTitle>{boards[i]}</CardTitle>
                    <Table $cols="234.5px 1fr">
                      <Cell $head $h={41.7}>Test Name</Cell><Cell $head $side $h={41.7}>Remarks</Cell>
                      {rows.map(([n, r]) => (
                        <React.Fragment key={n}>
                          <Cell>{n === "Assembled Board Inspection" ? <>Assembled Board<br />Inspection</> : n}</Cell>
                          <Cell $side>{r}</Cell>
                        </React.Fragment>
                      ))}
                    </Table>
                  </Card>
                ))}
              </BoardColumn>
            </Panel>
          </Page>
        </Browser>
      </Desktop>
    </Screen>
  );
}
